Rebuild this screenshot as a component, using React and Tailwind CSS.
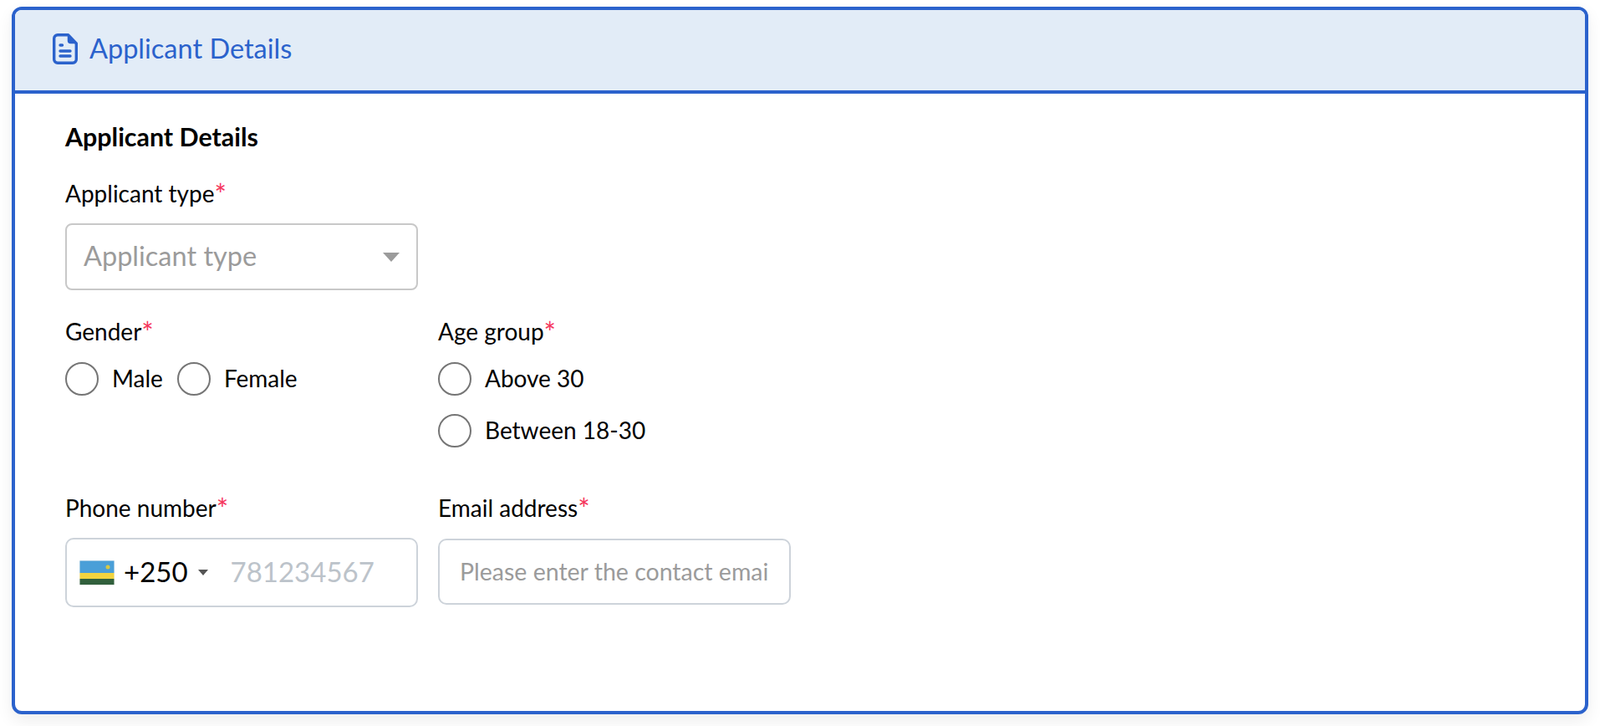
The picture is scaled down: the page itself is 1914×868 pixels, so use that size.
import React from "react";

const font = "font-['Lato','Noto_Sans',sans-serif]";

// document icon in the card header
const DocIcon = () => (
  <svg width="30" height="37" viewBox="0 0 30 37" fill="none" stroke="#2b62cc" strokeWidth="3.4" strokeLinecap="round" strokeLinejoin="round" className="shrink-0">
    <path d="M6 1.700h12.500L28.300 12v19a4.300 4.300 0 0 1-4.300 4.300H6A4.300 4.300 0 0 1 1.700 31V6A4.300 4.300 0 0 1 6 1.700z" />
    <path d="M18.500 2.500v6a3 3 0 0 0 3 3H27.500" fill="#2b62cc" strokeWidth="1.500" />
    <path d="M9 14h2.500M9 21h12M9 27h12" />
  </svg>
);

const RwandaFlag = () => (
  <svg width="42" height="30" viewBox="0 0 42 30" className="shrink-0">
    <rect width="42" height="30" fill="#f0f0f0" />
    <rect x="0.500" y="0.500" width="41" height="14.500" fill="#4a9fd8" />
    <rect x="0.500" y="15" width="41" height="7" fill="#f2d43f" />
    <rect x="0.500" y="22" width="41" height="7" fill="#31603c" />
    <circle cx="34" cy="8" r="2.500" fill="#d7c845" />
  </svg>
);

const Label = ({ children }) => (
  <label className="block h-[30px] text-[28px] leading-[30px] text-black">
    {children}
    <span className="align-[-3px] text-[34px] leading-[0] text-[#f5365c]">*</span>
  </label>
);

const Radio = ({ name, label }) => (
  <label className="flex h-10 items-center">
    <input type="radio" name={name} className="h-10 w-10 appearance-none rounded-full border-2 border-[#757575] bg-white" />
    <span className="ml-4 pb-0.5 text-[28px] text-black">{label}</span>
  </label>
);

export default function App() {
  return (
    <div className={`min-h-screen bg-white px-[14px] pt-2 ${font}`}>
      <div className="h-[846px] overflow-hidden rounded-[12px] border-4 border-[#2b62cc] bg-white shadow-[0_8px_20px_rgba(0,0,0,0.07)]">
        <div className="flex h-[100px] items-center gap-[14px] border-b-4 border-[#2b62cc] bg-[#e2ecf7] pl-[45px] pb-1">
          <DocIcon />
          <span className="text-[32.500px] text-[#2b62cc]">Applicant Details</span>
        </div>

        <div className="pl-[60px] pt-8">
          <h2 className="h-10 text-[30.400px] font-bold leading-[38px] text-black">Applicant Details</h2>

          <div className="mt-8">
            <Label>Applicant type</Label>
            <div className="mt-[21px] flex h-20 w-[422px] items-center justify-between rounded-[8px] border-2 border-[#c8c8c8] px-5 pb-0.5">
              <span className="text-[32.500px] text-[#9b9b9b]">Applicant type</span>
              <span className="mt-0.5 h-0 w-0 border-x-[10px] border-t-[11px] border-x-transparent border-t-[#9b9b9b]" />
            </div>
          </div>

          <div className="mt-[34px] flex gap-6">
            <div className="w-[422px]">
              <Label>Gender</Label>
              <div className="mt-[22px] flex gap-[17px]">
                <Radio name="gender" label="Male" />
                <Radio name="gender" label="Female" />
              </div>
            </div>
            <div className="w-[422px]">
              <Label>Age group</Label>
              <div className="mt-[22px] flex flex-col gap-[22px]">
                <Radio name="age" label="Above 30" />
                <Radio name="age" label="Between 18-30" />
              </div>
            </div>
          </div>

          <div className="mt-[57px] flex gap-6">
            <div className="w-[422px]">
              <Label>Phone number</Label>
              <div className="mt-[21px] flex h-[83px] items-center rounded-[10px] border-2 border-[#cdd3da] pl-[15px]">
                <RwandaFlag />
                <span className="ml-[11px] pb-0.5 text-[33px] text-black">+250</span>
                <span className="ml-3 h-0 w-0 border-x-[6px] border-t-[7px] border-x-transparent border-t-[#555555]" />
                <input placeholder="781234567" className="ml-[27px] w-[175px] pb-0.5 text-[33px] text-black outline-none placeholder:text-[#bcc3ca]" />
              </div>
            </div>
            <div className="w-[422px]">
              <Label>Email address</Label>
              <input
                placeholder="Please enter the contact email"
                className="mt-[22px] block h-[79px] w-[422px] rounded-[10px] border-2 border-[#cdd3da] px-6 pb-0.5 text-[28.500px] text-black outline-none placeholder:text-[#9b9b9b]"
              />
            </div>
          </div>
        </div>
      </div>
    </div>
  );
}
